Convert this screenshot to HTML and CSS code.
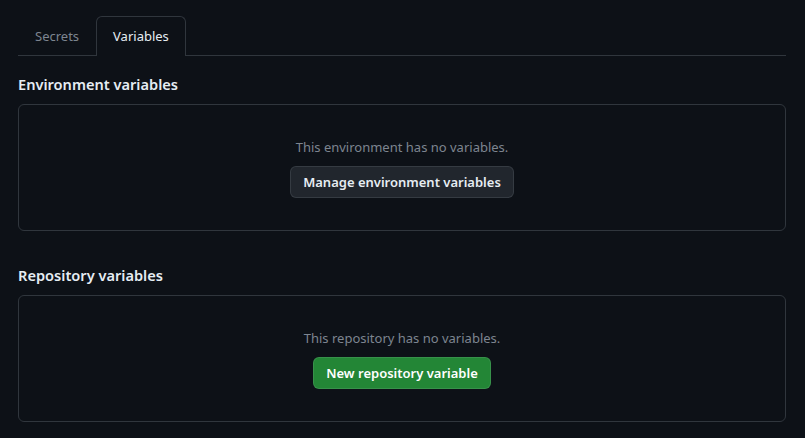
FILE: index.html
```html
<!DOCTYPE html>
<html lang="en">
<head>
<meta charset="utf-8">
<title>Variables</title>
<link rel="stylesheet" href="styles.css">
</head>
<body>
<div class="page">
  <nav class="tabnav">
    <a class="tab">Secrets</a>
    <a class="tab selected">Variables</a>
  </nav>
  <section class="section first">
    <h2 class="heading">Environment variables</h2>
    <div class="blankslate">
      <p class="msg">This environment has no variables.</p>
      <button class="btn">Manage environment variables</button>
    </div>
  </section>
  <section class="section">
    <h2 class="heading">Repository variables</h2>
    <div class="blankslate">
      <p class="msg">This repository has no variables.</p>
      <button class="btn btn-primary">New repository variable</button>
    </div>
  </section>
</div>
</body>
</html>
```

FILE: styles.css
```css
* { box-sizing: border-box; }
html, body {
  margin: 0;
  background: #0d1117;
  color: #e6edf3;
  font-family: "Noto Sans", "Open Sans", sans-serif;
  font-size: 13px;
}
.page {
  padding: 16px 19px 0 18px;
}
.tabnav {
  display: flex;
  border-bottom: 1px solid #30363d;
  height: 40px;
}
.tab {
  padding: 0 16px;
  line-height: 38px;
  font-size: 13px;
  color: #7d8590;
  border: 1px solid transparent;
  border-bottom: 0;
  border-radius: 6px 6px 0 0;
  margin-bottom: -1px;
}
.tab.selected {
  color: #e6edf3;
  border-color: #30363d;
  background: #0d1117;
  height: 40px;
}
.section { margin-top: 32px; }
.section.first { margin-top: 16px; }
.heading {
  margin: 0 0 8px;
  font-size: 14.6px;
  font-weight: 600;
  line-height: 24px;
}
.blankslate {
  border: 1px solid #30363d;
  border-radius: 6px;
  padding: 32px;
  display: flex;
  flex-direction: column;
  align-items: center;
}
.msg {
  margin: 0 0 8px;
  color: #7d8590;
  font-size: 13px;
  line-height: 21px;
}
.btn {
  font-family: inherit;
  font-size: 13px;
  font-weight: 600;
  color: #e6edf3;
  background: #21262d;
  border: 1px solid rgba(240,246,252,0.1);
  border-radius: 6px;
  height: 32px;
  padding: 0 12px;
  line-height: 20px;
}
.btn-primary {
  background: #238636;
  color: #ffffff;
  border-color: rgba(240,246,252,0.1);
}
```
